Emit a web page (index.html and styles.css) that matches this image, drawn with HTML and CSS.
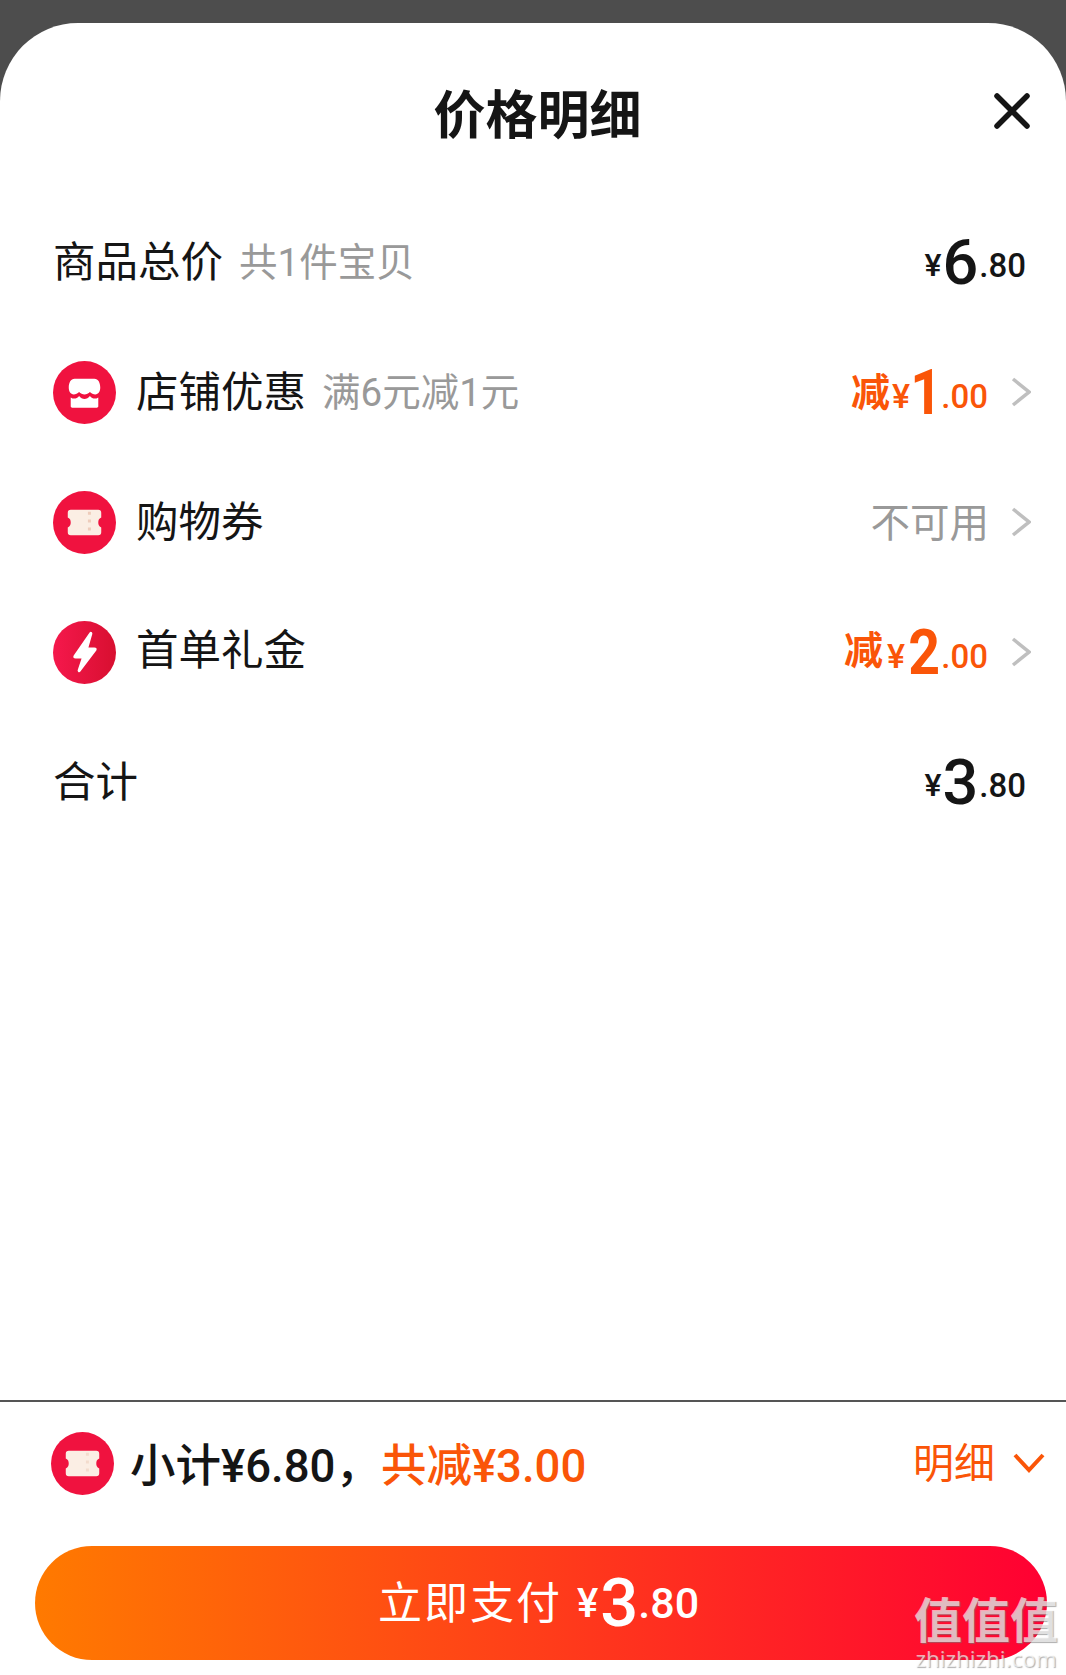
FILE: index.html
```html
<!DOCTYPE html>
<html>
<head>
    <title>价格明细</title>
    <link rel="stylesheet" href="styles.css">
</head>
<body>
    <div class="sheet">
        <div class="sheet-header">
            <h1 class="sheet-title">价格明细</h1>
            <svg class="close-icon" viewBox="0 0 36 36">
                <path d="M3 3L33 33M33 3L3 33" />
            </svg>
        </div>

        <ul class="price-list">
            <li class="price-row">
                <span class="row-label">商品总价</span>
                <span class="row-note">共1件宝贝</span>
                <span class="price">
                    <span class="price-yen">¥</span><span class="price-big">6</span><span class="price-small">.80</span>
                </span>
            </li>
            <li class="price-row">
                <svg class="round-icon" viewBox="0 0 64 64">
                    <circle cx="32" cy="32" r="32" fill="#f0123f" />
                    <path fill="#fff" d="M22 18H42C46 18 48 22 48 27C48 31 46 34 43 34C41 34 39 33 37.5 31.5C36 33 34 34 32 34C30 34 28 33 26.5 31.5C25 33 23 34 21 34C18 34 16 31 16 27C16 22 18 18 22 18Z" />
                    <path fill="#fff" d="M18 37C21 39 24 38.5 26.5 35.5C28 37.5 30 38.5 32 38.5C34 38.5 36 37.5 37.5 35.5C40 38.5 43 39 46 37V46C46 47 45 47.5 44 47.5H20C19 47.5 18 47 18 46Z" />
                </svg>
                <span class="row-label">店铺优惠</span>
                <span class="row-note">满6元减1元</span>
                <span class="price price-off">
                    <span class="price-cut">减</span><span class="price-yen">¥</span><span class="price-big">1</span><span class="price-small">.00</span>
                </span>
                <svg class="arrow-icon" viewBox="0 0 20 30">
                    <path d="M2 2L18 15L2 28" />
                </svg>
            </li>
            <li class="price-row">
                <svg class="round-icon" viewBox="0 0 64 64">
                    <circle cx="32" cy="32" r="32" fill="#f0123f" />
                    <path fill="#fbeee4" d="M18 19H46C48 19 49 20 49 22V27C46.500 28 46 30 46 32C46 34 46.500 36 49 37V42C49 44 48 45 46 45H18C16 45 15 44 15 42V37C17.500 36 18 34 18 32C18 30 17.500 28 15 27V22C15 20 16 19 18 19Z" />
                    <path stroke="#eeccbb" stroke-width="3" stroke-dasharray="3 5" d="M37 21V44" />
                </svg>
                <span class="row-label">购物券</span>
                <span class="price-none">不可用</span>
                <svg class="arrow-icon" viewBox="0 0 20 30">
                    <path d="M2 2L18 15L2 28" />
                </svg>
            </li>
            <li class="price-row price-row-gift">
                <svg class="round-icon" viewBox="0 0 64 64">
                    <defs>
                        <linearGradient id="boltBg" x1="0" y1="0" x2="1" y2="0">
                            <stop offset="0" stop-color="#f5184c" />
                            <stop offset="1" stop-color="#d80f30" />
                        </linearGradient>
                    </defs>
                    <circle cx="32" cy="32" r="32" fill="url(#boltBg)" />
                    <path fill="#fff" d="M37 12L21 35C20 37 21 38 23 38H29L25 50C25 52 27 53 28 51L44 30C45 28 44 27 42 27H36L40 13C40 11 38 10 37 12Z" />
                </svg>
                <span class="row-label">首单礼金</span>
                <span class="price price-off">
                    <span class="price-cut">减</span><span class="price-yen">¥</span><span class="price-big">2</span><span class="price-small">.00</span>
                </span>
                <svg class="arrow-icon" viewBox="0 0 20 30">
                    <path d="M2 2L18 15L2 28" />
                </svg>
            </li>
            <li class="price-row">
                <span class="row-label">合计</span>
                <span class="price">
                    <span class="price-yen">¥</span><span class="price-big">3</span><span class="price-small">.80</span>
                </span>
            </li>
        </ul>

        <div class="sheet-footer">
            <div class="summary">
                <svg class="round-icon" viewBox="0 0 64 64">
                    <circle cx="32" cy="32" r="32" fill="#f0123f" />
                    <path fill="#fbeee4" d="M18 19H46C48 19 49 20 49 22V27C46.500 28 46 30 46 32C46 34 46.500 36 49 37V42C49 44 48 45 46 45H18C16 45 15 44 15 42V37C17.500 36 18 34 18 32C18 30 17.500 28 15 27V22C15 20 16 19 18 19Z" />
                    <path stroke="#f3dccd" stroke-width="3" stroke-dasharray="3 5" d="M37 21V44" />
                </svg>
                <span class="summary-text">小计¥6.80，</span>
                <span class="summary-off">共减¥3.00</span>
                <span class="summary-toggle">明细</span>
                <svg class="down-icon" viewBox="0 0 34 22">
                    <path d="M3 3L17 18L31 3" />
                </svg>
            </div>
            <button class="pay-button">
                <span class="pay-label">立即支付</span>
                <span class="pay-yen">¥</span><span class="pay-big">3</span><span class="pay-small">.80</span>
            </button>
        </div>
    </div>

    <div class="watermark">
        <div class="watermark-mark">值值值</div>
        <div class="watermark-site">zhizhizhi.com</div>
    </div>
</body>
</html>
```

FILE: styles.css
```css
* {
    box-sizing: border-box;
}

html,
body {
    height: 100%;
}

body {
    margin: 0;
    background-color: #4d4d4d;
    padding-top: 23px;
    font-family: "Roboto", "Noto Sans CJK SC", sans-serif;
    color: #151515;
    position: relative;
    overflow: hidden;
}

.sheet {
    height: 1652px;
    background-color: #fff;
    border-radius: 78px 78px 0 0;
    display: flex;
    flex-direction: column;
}

.sheet-header {
    height: 174px;
    padding: 2px 36px 0 45px;
    display: grid;
    grid-template-columns: 1fr auto 1fr;
    align-items: center;
}

.sheet-title {
    grid-column: 2;
    margin: 0;
    font-size: 52px;
    font-weight: 700;
}

.close-icon {
    grid-column: 3;
    justify-self: end;
    width: 36px;
    height: 36px;
    fill: none;
    stroke: #151515;
    stroke-width: 5.5;
    stroke-linecap: round;
}

.price-list {
    list-style: none;
    margin: 0;
    padding: 0 35px 0 53px;
}

.price-row {
    height: 130px;
    display: flex;
    align-items: center;
}

.round-icon {
    width: 63px;
    height: 63px;
    flex: none;
    margin-right: 20px;
}

.row-label {
    font-size: 42.5px;
    font-weight: 400;
    margin-right: 16px;
    padding-bottom: 7px;
}

.price-row-gift .row-label {
    padding-bottom: 12px;
}

.row-note {
    font-size: 38.5px;
    color: #999;
    padding-bottom: 7px;
}

.price {
    margin-left: auto;
    margin-right: 5px;
    font-weight: 500;
    display: flex;
    align-items: center;
}

.price-yen {
    font-size: 32px;
    margin-top: 6px;
    margin-right: 1px;
}

.price-big {
    font-size: 63px;
    line-height: 63px;
    margin-right: 1px;
}

.price-small {
    font-size: 33px;
    margin-top: 6px;
}

.price-off {
    color: #fa5508;
    margin-right: 23px;
}

.price-off .price-yen {
    font-size: 34px;
    margin-top: 8px;
    margin-left: 2px;
}

.price-off .price-small {
    margin-top: 8px;
}

.price-off .price-big {
    font-weight: 700;
    transform: scaleX(0.88);
    margin: 0 -3px;
}

.price-row-gift .price-big {
    margin: 0 -1px 0 0;
}

.price-row-gift .price-cut {
    margin-right: 2px;
    padding-bottom: 11px;
}

.price-cut {
    font-size: 39px;
    font-weight: 700;
    padding-bottom: 7px;
}

.price-none {
    margin-left: auto;
    margin-right: 22px;
    padding-bottom: 6px;
    font-size: 39.5px;
    color: #999;
}

.arrow-icon {
    width: 20px;
    height: 30px;
    fill: none;
    stroke: #bfbfbf;
    stroke-width: 3.5;
}

.sheet-footer {
    margin-top: auto;
    border-top: 2px solid #555;
    padding: 0 20px 15px 35px;
}

.summary {
    height: 122px;
    padding: 0 0 0 16px;
    display: flex;
    align-items: center;
}

.summary .round-icon {
    margin-right: 16px;
}

.summary-text {
    font-size: 45.5px;
    font-weight: 500;
    padding-bottom: 2px;
}

.summary-off {
    font-size: 45.5px;
    font-weight: 500;
    color: #fa5508;
    padding-bottom: 2px;
}

.summary-toggle {
    margin-left: auto;
    margin-right: 17px;
    padding-bottom: 6px;
    font-size: 41px;
    color: #fa5508;
}

.down-icon {
    width: 34px;
    height: 22px;
    fill: none;
    stroke: #fa5508;
    stroke-width: 4;
}

.pay-button {
    width: 1012px;
    height: 114px;
    margin-top: 22px;
    border: none;
    border-radius: 57px;
    background: linear-gradient(to right, #ff7a00, #ff0033);
    color: #fff;
    font-family: inherit;
    display: flex;
    align-items: center;
    justify-content: center;
    padding: 0 5px 0 0;
}

.pay-label {
    font-size: 44px;
    letter-spacing: 2px;
    margin-right: 15px;
    padding-bottom: 6px;
}

.pay-yen {
    font-size: 40px;
    font-weight: 500;
    margin-right: 2px;
}

.pay-big {
    font-size: 67px;
    font-weight: 500;
}

.pay-small {
    font-size: 43px;
    font-weight: 500;
}

.watermark {
    position: absolute;
    right: 8px;
    bottom: 3px;
    text-align: center;
    color: rgba(255, 255, 255, 0.65);
    text-shadow: 1px 1px 1px rgba(120, 120, 120, 0.6);
}

.watermark-mark {
    font-size: 48px;
    font-weight: 700;
    line-height: 58px;
    font-family: "Noto Sans CJK SC", sans-serif;
}

.watermark-site {
    font-size: 22.5px;
    line-height: 26px;
    font-family: "Open Sans", sans-serif;
}
```
